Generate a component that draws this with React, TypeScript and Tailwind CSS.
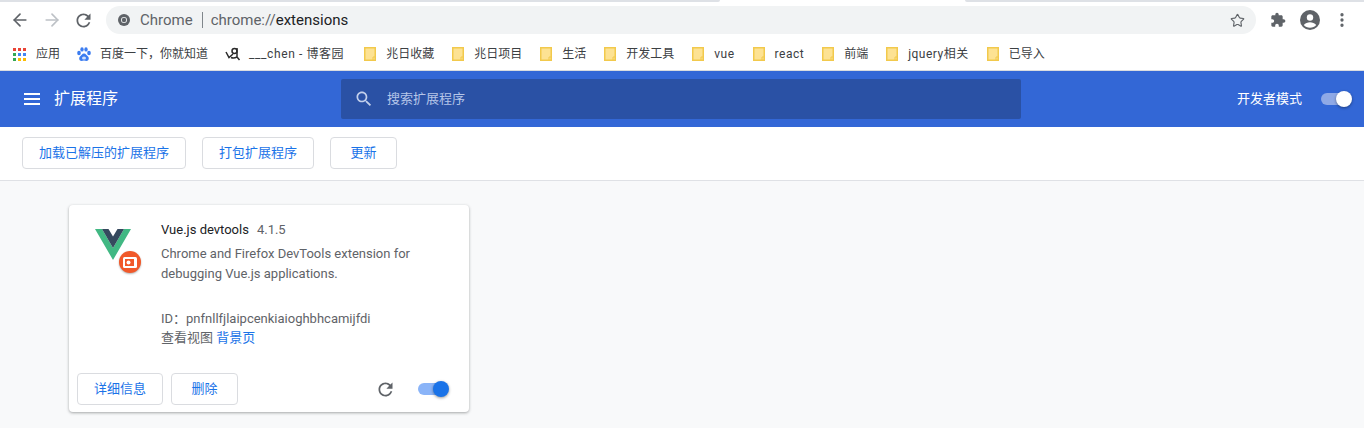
import { ArrowLeft, ArrowRight, Star, MoreVertical } from 'lucide-react';

const FONT = 'font-[Roboto,"Noto_Sans_CJK_SC",sans-serif]';

const folders = [
    { name: '兆日收藏', latin: false },
    { name: '兆日项目', latin: false },
    { name: '生活', latin: false },
    { name: '开发工具', latin: false },
    { name: 'vue', latin: true },
    { name: 'react', latin: true },
    { name: '前端', latin: false },
    { name: 'jquery相关', latin: true },
    { name: '已导入', latin: false },
];

function FolderIcon() {
    return (
        <svg width="12" height="14" viewBox="0 0 12 14" className="shrink-0">
            <path d="M.75.75h10.500v12.500H.75z" fill="#fde293" stroke="#f2c94c" strokeWidth="1.500" />
            <path d="M9 13v-3h2.500" fill="none" stroke="#f2c94c" strokeWidth="1" />
        </svg>
    );
}

function AppsIcon() {
    const colors = ['#ea4335', '#ea4335', '#ea4335', '#34a853', '#4285f4', '#4285f4', '#34a853', '#fbbc04', '#fbbc04'];
    return (
        <div className="grid grid-cols-3 gap-[2px] w-[13px] shrink-0">
            {colors.map((c, i) => (
                <span key={i} className="w-[3px] h-[3px]" style={{ backgroundColor: c }} />
            ))}
        </div>
    );
}

function BaiduIcon() {
    return (
        <svg width="14" height="15" viewBox="0 0 14 15" className="shrink-0" fill="#3b7cf0">
            <ellipse cx="2" cy="6" rx="1.800" ry="2.200" />
            <ellipse cx="5" cy="2.400" rx="1.700" ry="2.200" />
            <ellipse cx="9" cy="2.400" rx="1.700" ry="2.200" />
            <ellipse cx="12" cy="6" rx="1.800" ry="2.200" />
            <path d="M7 6.500c-2 0-2.600 2-4 3-1.500 1.200-.8 4.500 1.500 4.500 1 0 1.600-.4 2.500-.4s1.500.4 2.500.4c2.300 0 3-3.300 1.500-4.500-1.400-1-2-3-4-3z" />
            <ellipse cx="7" cy="11" rx="2" ry="1.600" fill="#cfe0fb" />
        </svg>
    );
}

function BlogIcon() {
    return (
        <svg width="16" height="16" viewBox="0 0 16 16" className="shrink-0" fill="none" stroke="#2b2b2b" strokeWidth="1.500">
            <path d="M1 6l3 5.500 4-3.500" />
            <circle cx="9.500" cy="5" r="2.500" />
            <path d="M12 2v9l2.500 3" />
            <path d="M6 11.500c2 .8 4 .5 6-.5" />
        </svg>
    );
}

function ChromeIcon() {
    return (
        <svg width="12" height="12" viewBox="0 0 12 12" className="shrink-0">
            <circle cx="6" cy="6" r="6" fill="#5f6368" />
            <circle cx="6" cy="6" r="3" fill="#f1f3f4" />
            <circle cx="6" cy="6" r="2.200" fill="#5f6368" />
        </svg>
    );
}

function ReloadIcon({ size }: { size: number }) {
    return (
        <svg width={size} height={size} viewBox="0 0 24 24" fill="#5f6368" className="shrink-0">
            <path d="M17.650 6.350C16.200 4.900 14.210 4 12 4c-4.420 0-7.990 3.580-7.990 8s3.570 8 7.990 8c3.730 0 6.840-2.550 7.730-6h-2.080c-.82 2.330-3.040 4-5.650 4-3.310 0-6-2.690-6-6s2.690-6 6-6c1.660 0 3.140.69 4.220 1.780L13 11h7V4l-2.350 2.350z" />
        </svg>
    );
}

function SearchIcon() {
    return (
        <svg width="20" height="20" viewBox="0 0 24 24" fill="#c3d0ec" className="shrink-0">
            <path d="M15.500 14h-.79l-.28-.27C15.410 12.590 16 11.110 16 9.500 16 5.910 13.090 3 9.500 3S3 5.910 3 9.500 5.910 16 9.500 16c1.610 0 3.090-.59 4.230-1.570l.27.28v.79l5 4.990L20.490 19l-4.990-5zm-6 0C7.010 14 5 11.990 5 9.500S7.010 5 9.500 5 14 7.010 14 9.500 11.990 14 9.500 14z" />
        </svg>
    );
}

function MenuIcon() {
    return (
        <div className="flex flex-col gap-[3px] w-[16px] shrink-0">
            <span className="h-[2px] bg-white" />
            <span className="h-[2px] bg-white" />
            <span className="h-[2px] bg-white" />
        </div>
    );
}

function PuzzleIcon() {
    return (
        <svg width="16" height="16" viewBox="0 0 24 24" fill="#5f6368">
            <path d="M20.500 11H19V7c0-1.100-.9-2-2-2h-4V3.500C13 2.120 11.880 1 10.500 1S8 2.120 8 3.500V5H4c-1.100 0-2 .9-2 2v3.800h1.500c1.490 0 2.700 1.210 2.700 2.700s-1.210 2.700-2.700 2.700H2V20c0 1.100.9 2 2 2h3.800v-1.500c0-1.490 1.210-2.700 2.700-2.700s2.700 1.210 2.700 2.700V22H17c1.100 0 2-.9 2-2v-4h1.500c1.380 0 2.500-1.120 2.500-2.500S21.880 11 20.500 11z" />
        </svg>
    );
}

function AccountIcon() {
    return (
        <svg width="20" height="20" viewBox="0 0 20 20">
            <circle cx="10" cy="10" r="10" fill="#5f6368" />
            <circle cx="10" cy="7.500" r="3.200" fill="#fff" />
            <path d="M3.800 15c1.500-2 3.800-2.800 6.200-2.800s4.700.8 6.200 2.800c-1.500 1.700-3.700 2.800-6.200 2.800s-4.700-1.100-6.200-2.800z" fill="#fff" />
        </svg>
    );
}

function VueLogo() {
    return (
        <div className="relative w-[48px] h-[48px] shrink-0">
            <svg width="36" height="32" viewBox="0 0 36 32" className="absolute left-0 top-0">
                <path d="M0 0h7l11 19L29 0h7L18 31z" fill="#41b883" />
                <path d="M7 0h6.500L18 7.500 22.500 0H29L18 19z" fill="#35495e" />
            </svg>
            <div className="absolute left-[24px] top-[22px] w-[22px] h-[22px] rounded-full bg-[#f1592a] flex items-center justify-center shadow-[0_1px_2px_rgba(0,0,0,0.3)]">
                <svg width="14" height="11" viewBox="0 0 14 11">
                    <rect width="14" height="11" rx="1.500" fill="#fff" />
                    <rect x="2" y="2" width="9" height="7" fill="#f1592a" />
                    <circle cx="5.500" cy="5.500" r="2" fill="#fff" />
                </svg>
            </div>
        </div>
    );
}

function Toggle({ track, knob }: { track: string; knob: string }) {
    return (
        <div className="relative w-[30px] h-[12px] shrink-0">
            <div className={`w-full h-full rounded-full ${track}`} />
            <div className={`absolute -right-[1px] -top-[2px] w-[16px] h-[16px] rounded-full shadow-[0_1px_3px_rgba(0,0,0,0.4)] ${knob}`} />
        </div>
    );
}

function OutlineButton({ label, className }: { label: string; className: string }) {
    return (
        <button className={`h-[32px] rounded-[4px] border border-[#dadce0] bg-white text-[13px] text-[#1a73e8] flex items-center justify-center ${className}`}>
            {label}
        </button>
    );
}

export default function App() {
    return (
        <div className={`w-full h-[428px] overflow-hidden flex flex-col bg-white ${FONT}`}>
            {/* tab strip remnant */}
            <div className="h-[2px] flex shrink-0">
                <div className="w-[720px] bg-[#dee1e6] rounded-br-[4px]" />
                <div className="w-[245px] bg-white" />
                <div className="flex-1 bg-[#dee1e6] rounded-bl-[4px]" />
            </div>

            {/* browser toolbar */}
            <div className="h-[36px] flex items-center pl-[10px] pr-[13px] shrink-0">
                <ArrowLeft size={20} strokeWidth={2} className="text-[#5f6368] shrink-0" />
                <ArrowRight size={20} strokeWidth={2} className="text-[#bdc1c6] ml-[12px] shrink-0" />
                <div className="ml-[11px]"><ReloadIcon size={21} /></div>
                <div className="ml-[12px] w-[1150px] h-[28px] rounded-full bg-[#f1f3f4] flex items-center pl-[12px] pr-[11px] shrink-0">
                    <ChromeIcon />
                    <span className="ml-[10px] text-[15px] text-[#5f6368]">Chrome</span>
                    <span className="ml-[9px] w-px h-[16px] bg-[#80868b]" />
                    <span className="ml-[8px] text-[15px] text-[#5f6368]">
                        chrome://<span className="text-[#202124]">extensions</span>
                    </span>
                    <Star size={15} strokeWidth={1.800} className="ml-auto text-[#5f6368]" />
                </div>
                <div className="ml-[14px]"><PuzzleIcon /></div>
                <div className="ml-[14px]"><AccountIcon /></div>
                <MoreVertical size={18} strokeWidth={2.400} className="ml-[13px] text-[#5f6368]" />
            </div>

            {/* bookmarks bar */}
            <div className="h-[33px] flex items-center pl-[13px] text-[12px] text-[#3c4043] whitespace-nowrap border-b border-[#dadce0] shrink-0">
                <AppsIcon />
                <span className="ml-[10px]">应用</span>
                <div className="ml-[17px]"><BaiduIcon /></div>
                <span className="ml-[9px]">百度一下，你就知道</span>
                <div className="ml-[17px]"><BlogIcon /></div>
                <span className="ml-[8px] tracking-[0.6px]">___chen - 博客园</span>
                <div className="flex items-center gap-[18px] ml-[20px]">
                    {folders.map((f) => (
                        <div key={f.name} className="flex items-center gap-[10px]">
                            <FolderIcon />
                            <span className={f.latin ? 'tracking-[0.5px]' : ''}>{f.name}</span>
                        </div>
                    ))}
                </div>
            </div>

            {/* extensions header */}
            <div className="h-[56px] bg-[#3367d6] flex items-center pl-[24px] pr-[13px] shrink-0">
                <MenuIcon />
                <span className="ml-[14px] w-[287px] text-[16px] text-white">扩展程序</span>
                <div className="w-[680px] h-[40px] rounded-[2px] bg-[#2a51a5] flex items-center pl-[13px] shrink-0">
                    <SearchIcon />
                    <span className="ml-[13px] text-[13px] text-[#b5c5e8]">搜索扩展程序</span>
                </div>
                <span className="ml-auto text-[13px] text-white">开发者模式</span>
                <div className="ml-[19px]">
                    <Toggle track="bg-[#8fa9e6]" knob="bg-white" />
                </div>
            </div>

            {/* action row */}
            <div className="h-[54px] flex items-center gap-[16px] pl-[22px] pb-[2px] border-b border-[#dfe1e5] shrink-0">
                <OutlineButton label="加载已解压的扩展程序" className="w-[164px]" />
                <OutlineButton label="打包扩展程序" className="w-[112px]" />
                <OutlineButton label="更新" className="w-[67px]" />
            </div>

            {/* card area */}
            <div className="flex-1 bg-[#f8f9fa] pl-[69px] pt-[24px]">
                <div className="w-[400px] h-[207px] bg-white rounded-[4px] shadow-[0_1px_3px_rgba(60,64,67,0.45)] flex flex-col">
                    <div className="flex pl-[26px] pt-[24px] flex-1">
                        <VueLogo />
                        <div className="ml-[18px] flex flex-col w-[258px]">
                            <div className="flex items-center text-[13px] leading-[16px] -mt-[7px]">
                                <span className="text-[#202124]">Vue.js devtools</span>
                                <span className="ml-[8px] text-[#5f6368]">4.1.5</span>
                            </div>
                            <p className="mt-[6px] text-[13px] leading-[20px] text-[#5f6368]">
                                Chrome and Firefox DevTools extension for debugging Vue.js applications.
                            </p>
                            <p className="mt-[25px] text-[13px] leading-[20px] text-[#5f6368] whitespace-nowrap">
                                ID：pnfnllfjlaipcenkiaioghbhcamijfdi
                            </p>
                            <p className="-mt-[1px] text-[13px] leading-[20px] text-[#5f6368]">
                                查看视图 <span className="text-[#1a73e8]">背景页</span>
                            </p>
                        </div>
                    </div>
                    <div className="flex items-center pl-[8px] pr-[21px] pb-[7px]">
                        <OutlineButton label="详细信息" className="w-[86px]" />
                        <OutlineButton label="删除" className="w-[67px] ml-[8px]" />
                        <div className="ml-auto"><ReloadIcon size={21} /></div>
                        <div className="ml-[22px]">
                            <Toggle track="bg-[#8ab4f8]" knob="bg-[#1a73e8]" />
                        </div>
                    </div>
                </div>
            </div>
        </div>
    );
}
